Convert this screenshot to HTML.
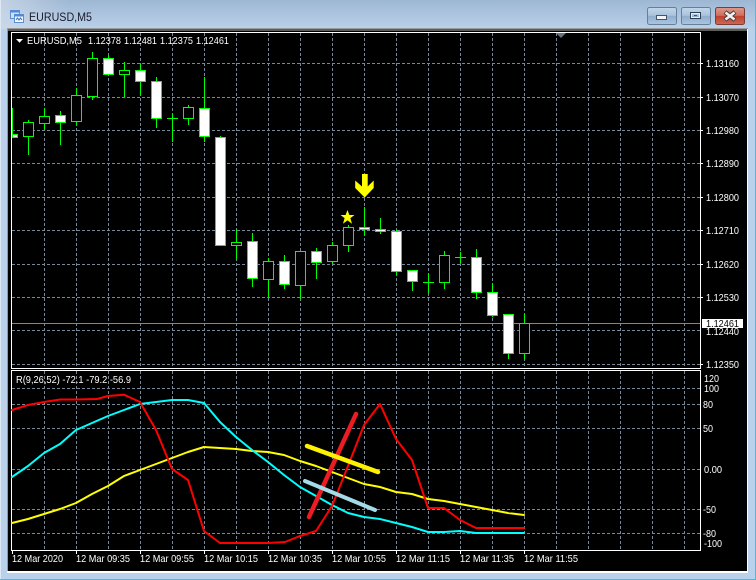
<!DOCTYPE html>
<html><head><meta charset="utf-8"><style>
html,body{margin:0;padding:0;background:#b9d1ea}
body{width:756px;height:580px;overflow:hidden;position:relative}
svg{position:absolute;left:0;top:0;display:block}
text{font-family:"Liberation Sans",sans-serif;font-size:10.5px;fill:#fff}
.g line{stroke:#778899;stroke-width:1;stroke-dasharray:3 2;shape-rendering:crispEdges}
.c line,.c rect{stroke:#0f0;stroke-width:1;shape-rendering:crispEdges}
.c .h{fill:#000}.c .w{fill:#fff}
.s{fill:none;stroke-linejoin:round;stroke-linecap:round}
</style></head><body>
<svg width="756" height="580" viewBox="0 0 756 580" xmlns="http://www.w3.org/2000/svg">
<defs>
<linearGradient id="t" x1="0" y1="0" x2="0" y2="1"><stop offset="0" stop-color="#9db7d3"/><stop offset="1" stop-color="#bad1ea"/></linearGradient>
<linearGradient id="tl" x1="0" y1="0" x2="1" y2="0"><stop offset="0" stop-color="#cfdbe8" stop-opacity=".75"/><stop offset="1" stop-color="#cfdbe8" stop-opacity="0"/></linearGradient>
<linearGradient id="b" x1="0" y1="0" x2="0" y2="1"><stop offset="0" stop-color="#c3d6e9"/><stop offset=".48" stop-color="#a9c2dc"/><stop offset=".5" stop-color="#8fadcc"/><stop offset="1" stop-color="#abc6e2"/></linearGradient>
<linearGradient id="r" x1="0" y1="0" x2="0" y2="1"><stop offset="0" stop-color="#dd9a8c"/><stop offset=".48" stop-color="#cf6e5c"/><stop offset=".5" stop-color="#bd3f2c"/><stop offset="1" stop-color="#cd6a55"/></linearGradient>
</defs>
<rect width="756" height="580" fill="#b9d1ea"/>
<rect width="756" height="29" fill="url(#t)"/>
<rect width="70" height="29" fill="url(#tl)"/>
<rect x="0" y="0" width="1" height="580" fill="#dce8f4"/>
<rect x="755" y="0" width="1" height="580" fill="#3cc5d2"/>
<rect x="0" y="579" width="756" height="1" fill="#3cc5d2"/>
<rect x="7" y="28" width="741" height="1" fill="#9b9b9b"/>
<rect x="7" y="29" width="741" height="2" fill="#5c5c5c"/>
<rect x="8" y="31" width="739" height="540" fill="#000"/>
<rect x="7" y="29" width="1" height="543" fill="#8e99a5"/>
<rect x="747" y="29" width="1" height="543" fill="#fff"/>
<rect x="7" y="571" width="741" height="2" fill="#fff"/>

<!-- title icon -->
<g shape-rendering="crispEdges">
<rect x="10.5" y="10.5" width="9" height="8" fill="#cfe0f5" stroke="#5d8fd0"/>
<rect x="10.5" y="10.5" width="9" height="2" fill="#4f88d6"/>
<rect x="14.5" y="14.5" width="9" height="8" fill="#f2f7fd" stroke="#5d8fd0"/>
<rect x="14.5" y="14.5" width="9" height="2" fill="#4f88d6"/>
</g>
<path d="M16 20l1.5-2 1.5 2 1.5-2 1.5 2" fill="none" stroke="#3a70b8" stroke-width="1"/>
<text x="29" y="21" style="font-size:11.5px;fill:#1b1b2b" textLength="63" lengthAdjust="spacingAndGlyphs">EURUSD,M5</text>

<!-- buttons -->
<rect x="647.5" y="7.5" width="29" height="17" rx="2" fill="url(#b)" stroke="#66809c"/>
<rect x="656.5" y="15.5" width="10" height="4" fill="#f1f4f7" stroke="#45556a"/>
<rect x="681.5" y="7.5" width="29" height="17" rx="2" fill="url(#b)" stroke="#66809c"/>
<rect x="690.5" y="12.5" width="10" height="6" fill="none" stroke="#2f3f52" stroke-width="1"/>
<rect x="691.5" y="13.5" width="8" height="4" fill="none" stroke="#e9eef3"/>
<rect x="694" y="15" width="3" height="1" fill="#43536a"/>
<rect x="715.5" y="7.5" width="29" height="17" rx="2" fill="url(#r)" stroke="#7c3b36"/>
<path d="M725 12l10 8M735 12l-10 8" stroke="#4a3a3c" stroke-width="4.4"/>
<path d="M725.5 12.5l9 7M734.5 12.5l-9 7" stroke="#f2f2f2" stroke-width="2.6"/>

<!-- grid -->
<g class="g">
<line x1="44.5" y1="33" x2="44.5" y2="368"/><line x1="76.5" y1="33" x2="76.5" y2="368"/><line x1="108.5" y1="33" x2="108.5" y2="368"/><line x1="140.5" y1="33" x2="140.5" y2="368"/><line x1="172.5" y1="33" x2="172.5" y2="368"/><line x1="204.5" y1="33" x2="204.5" y2="368"/><line x1="236.5" y1="33" x2="236.5" y2="368"/><line x1="268.5" y1="33" x2="268.5" y2="368"/><line x1="300.5" y1="33" x2="300.5" y2="368"/><line x1="332.5" y1="33" x2="332.5" y2="368"/><line x1="364.5" y1="33" x2="364.5" y2="368"/><line x1="396.5" y1="33" x2="396.5" y2="368"/><line x1="428.5" y1="33" x2="428.5" y2="368"/><line x1="460.5" y1="33" x2="460.5" y2="368"/><line x1="492.5" y1="33" x2="492.5" y2="368"/><line x1="524.5" y1="33" x2="524.5" y2="368"/><line x1="556.5" y1="33" x2="556.5" y2="368"/><line x1="588.5" y1="33" x2="588.5" y2="368"/><line x1="620.5" y1="33" x2="620.5" y2="368"/><line x1="652.5" y1="33" x2="652.5" y2="368"/><line x1="684.5" y1="33" x2="684.5" y2="368"/>
<line x1="44.5" y1="371" x2="44.5" y2="550"/><line x1="76.5" y1="371" x2="76.5" y2="550"/><line x1="108.5" y1="371" x2="108.5" y2="550"/><line x1="140.5" y1="371" x2="140.5" y2="550"/><line x1="172.5" y1="371" x2="172.5" y2="550"/><line x1="204.5" y1="371" x2="204.5" y2="550"/><line x1="236.5" y1="371" x2="236.5" y2="550"/><line x1="268.5" y1="371" x2="268.5" y2="550"/><line x1="300.5" y1="371" x2="300.5" y2="550"/><line x1="332.5" y1="371" x2="332.5" y2="550"/><line x1="364.5" y1="371" x2="364.5" y2="550"/><line x1="396.5" y1="371" x2="396.5" y2="550"/><line x1="428.5" y1="371" x2="428.5" y2="550"/><line x1="460.5" y1="371" x2="460.5" y2="550"/><line x1="492.5" y1="371" x2="492.5" y2="550"/><line x1="524.5" y1="371" x2="524.5" y2="550"/><line x1="556.5" y1="371" x2="556.5" y2="550"/><line x1="588.5" y1="371" x2="588.5" y2="550"/><line x1="620.5" y1="371" x2="620.5" y2="550"/><line x1="652.5" y1="371" x2="652.5" y2="550"/><line x1="684.5" y1="371" x2="684.5" y2="550"/>
<line x1="12" y1="63.5" x2="700" y2="63.5"/><line x1="12" y1="97.5" x2="700" y2="97.5"/><line x1="12" y1="130.5" x2="700" y2="130.5"/><line x1="12" y1="163.5" x2="700" y2="163.5"/><line x1="12" y1="197.5" x2="700" y2="197.5"/><line x1="12" y1="230.5" x2="700" y2="230.5"/><line x1="12" y1="264.5" x2="700" y2="264.5"/><line x1="12" y1="297.5" x2="700" y2="297.5"/><line x1="12" y1="330.5" x2="700" y2="330.5"/><line x1="12" y1="364.5" x2="700" y2="364.5"/>
<line x1="12" y1="388.5" x2="700" y2="388.5"/><line x1="12" y1="404.5" x2="700" y2="404.5"/><line x1="12" y1="428.5" x2="700" y2="428.5"/><line x1="12" y1="469.5" x2="700" y2="469.5"/><line x1="12" y1="509.5" x2="700" y2="509.5"/><line x1="12" y1="533.5" x2="700" y2="533.5"/>
</g>

<!-- bid line -->
<rect x="12" y="323" width="688" height="1" fill="#778899"/>

<!-- candles -->
<g class="c">
<line x1="12.5" y1="108" x2="12.5" y2="137"/><rect class="w" x="12.5" y="134.5" width="5" height="3"/>
<line x1="28.5" y1="120" x2="28.5" y2="155"/><rect class="h" x="23.5" y="122.5" width="10" height="14"/>
<line x1="44.5" y1="108" x2="44.5" y2="129"/><rect class="h" x="39.5" y="116.5" width="10" height="7"/>
<line x1="60.5" y1="111" x2="60.5" y2="145"/><rect class="w" x="55.5" y="115.5" width="10" height="7"/>
<line x1="76.5" y1="88" x2="76.5" y2="125"/><rect class="h" x="71.5" y="95.5" width="10" height="26"/>
<line x1="92.5" y1="52" x2="92.5" y2="100"/><rect class="h" x="87.5" y="58.5" width="10" height="38"/>
<line x1="108.5" y1="55" x2="108.5" y2="76"/><rect class="w" x="103.5" y="58.5" width="10" height="16"/>
<line x1="124.5" y1="62" x2="124.5" y2="97"/><rect class="h" x="119.5" y="70.5" width="10" height="4"/>
<line x1="140.5" y1="64" x2="140.5" y2="95"/><rect class="w" x="135.5" y="70.5" width="10" height="11"/>
<line x1="156.5" y1="77" x2="156.5" y2="128"/><rect class="w" x="151.5" y="81.5" width="10" height="37"/>
<line x1="172.5" y1="114" x2="172.5" y2="142"/><line x1="167" y1="118.5" x2="178" y2="118.5"/>
<line x1="188.5" y1="105" x2="188.5" y2="125"/><rect class="h" x="183.5" y="107.5" width="10" height="11"/>
<line x1="204.5" y1="77" x2="204.5" y2="142"/><rect class="w" x="199.5" y="108.5" width="10" height="28"/>
<line x1="220.5" y1="136" x2="220.5" y2="245"/><rect class="w" x="215.5" y="137.5" width="10" height="108"/>
<line x1="236.5" y1="229" x2="236.5" y2="259"/><rect class="h" x="231.5" y="242.5" width="10" height="3"/>
<line x1="252.5" y1="233" x2="252.5" y2="287"/><rect class="w" x="247.5" y="241.5" width="10" height="37"/>
<line x1="268.5" y1="258" x2="268.5" y2="297"/><rect class="h" x="263.5" y="261.5" width="10" height="18"/>
<line x1="284.5" y1="255" x2="284.5" y2="289"/><rect class="w" x="279.5" y="261.5" width="10" height="23"/>
<line x1="300.5" y1="251" x2="300.5" y2="299"/><rect class="h" x="295.5" y="251.5" width="10" height="34"/>
<line x1="316.5" y1="248" x2="316.5" y2="279"/><rect class="w" x="311.5" y="251.5" width="10" height="11"/>
<line x1="332.5" y1="242" x2="332.5" y2="264"/><rect class="h" x="327.5" y="245.5" width="10" height="16"/>
<line x1="348.5" y1="225" x2="348.5" y2="252"/><rect class="h" x="343.5" y="227.5" width="10" height="18"/>
<line x1="364.5" y1="207" x2="364.5" y2="236"/><rect class="w" x="359.5" y="227.5" width="10" height="2"/>
<line x1="380.5" y1="218" x2="380.5" y2="234"/><rect class="w" x="375.5" y="229.5" width="10" height="2"/>
<line x1="396.5" y1="230" x2="396.5" y2="275"/><rect class="w" x="391.5" y="231.5" width="10" height="40"/>
<line x1="412.5" y1="270" x2="412.5" y2="291"/><rect class="w" x="407.5" y="270.5" width="10" height="11"/>
<line x1="428.5" y1="273" x2="428.5" y2="293"/><line x1="423" y1="282.5" x2="434" y2="282.5"/>
<line x1="444.5" y1="251" x2="444.5" y2="289"/><rect class="h" x="439.5" y="255.5" width="10" height="27"/>
<line x1="460.5" y1="252" x2="460.5" y2="263"/><line x1="455" y1="257.5" x2="466" y2="257.5"/>
<line x1="476.5" y1="249" x2="476.5" y2="299"/><rect class="w" x="471.5" y="257.5" width="10" height="35"/>
<line x1="492.5" y1="283" x2="492.5" y2="317"/><rect class="w" x="487.5" y="292.5" width="10" height="23"/>
<line x1="508.5" y1="314" x2="508.5" y2="359"/><rect class="w" x="503.5" y="314.5" width="10" height="39"/>
<line x1="524.5" y1="314" x2="524.5" y2="359"/><rect class="h" x="519.5" y="323.5" width="10" height="30"/>
</g>

<!-- star and arrow -->
<path d="M347.5 210l1.9 5h5.1l-4.1 3.1 1.6 5.6-4.5-3.3-4.5 3.3 1.6-5.6-4.1-3.1h5.1z" fill="#ff0"/>
<path d="M362 174h5.7v12.5l6-6v7.5l-9 9.5-9.5-9.5v-7.5l6.8 6z" fill="#ff0"/>

<!-- frames -->
<g shape-rendering="crispEdges" fill="#fff">
<rect x="11" y="32" width="690" height="1"/>
<rect x="11" y="32" width="1" height="337"/>
<rect x="700" y="32" width="1" height="337"/>
<rect x="11" y="368" width="690" height="1"/>
<rect x="11" y="370" width="690" height="1"/>
<rect x="11" y="370" width="1" height="181"/>
<rect x="700" y="370" width="1" height="181"/>
<rect x="11" y="550" width="690" height="1"/>
<rect x="12" y="551" width="1" height="3"/><rect x="76" y="551" width="1" height="3"/><rect x="140" y="551" width="1" height="3"/><rect x="204" y="551" width="1" height="3"/><rect x="268" y="551" width="1" height="3"/><rect x="332" y="551" width="1" height="3"/><rect x="396" y="551" width="1" height="3"/><rect x="460" y="551" width="1" height="3"/><rect x="524" y="551" width="1" height="3"/>
<rect x="701" y="63" width="2" height="1"/><rect x="701" y="97" width="2" height="1"/><rect x="701" y="130" width="2" height="1"/><rect x="701" y="163" width="2" height="1"/><rect x="701" y="197" width="2" height="1"/><rect x="701" y="230" width="2" height="1"/><rect x="701" y="264" width="2" height="1"/><rect x="701" y="297" width="2" height="1"/><rect x="701" y="364" width="2" height="1"/>
</g>
<path d="M556 33h10l-5 5z" fill="#66727e"/>

<!-- indicator lines -->
<polyline class="s" stroke="#ff0" stroke-width="2" points="12,523 28,519 44,514 60,509 76,503 92,494 108,486 124,476 140,470 156,464 172,458 188,452 204,447 220,448 236,449 252,451 268,452 284,455 300,461 316,466 332,472 348,478 364,484 380,487 396,492 412,494 428,499 444,501 460,504 476,507 492,510 508,513 524,515"/>
<polyline class="s" stroke="#0ff" stroke-width="2" points="12,477 28,466 44,453 60,444 76,430 92,423 108,416 124,410 140,404 156,402 172,400 188,400 204,403 220,422 236,437 252,450 268,462 284,475 300,487 316,496 332,505 348,513 364,517 380,519 396,523 412,527 428,532 444,532 460,531 476,533 492,533 508,533 524,533"/>
<polyline class="s" stroke="#f00" stroke-width="2" points="12,410 28,405 44,402 60,399.5 76,399.5 97,399 108,396 124,394.7 140,402 156,430 172,469 188,480 204,531 220,543 236,543 252,543 268,543 285,542 300,536 316,531 332,506 348,466 364,425 380,404 396,439 412,460 428,508 444,508 460,520 476,528 492,528 508,528 524,528"/>
<line x1="309" y1="517" x2="356" y2="414" stroke="#ed1c24" stroke-width="4.5" stroke-linecap="round"/>
<line x1="307" y1="446" x2="378" y2="472" stroke="#fff200" stroke-width="4.5" stroke-linecap="round"/>
<line x1="305" y1="481" x2="375" y2="510" stroke="#a4dbe8" stroke-width="4" stroke-linecap="round"/>

<!-- legend -->
<path d="M16 39h7l-3.5 3.8z" fill="#fff"/>
<text x="27" y="44" textLength="55" lengthAdjust="spacingAndGlyphs">EURUSD,M5</text>
<text x="88" y="44" textLength="33" lengthAdjust="spacingAndGlyphs">1.12378</text>
<text x="124" y="44" textLength="33" lengthAdjust="spacingAndGlyphs">1.12481</text>
<text x="160" y="44" textLength="33" lengthAdjust="spacingAndGlyphs">1.12375</text>
<text x="196" y="44" textLength="33" lengthAdjust="spacingAndGlyphs">1.12461</text>
<text x="16" y="383" textLength="115" lengthAdjust="spacingAndGlyphs">R(9,26,52) -72.1 -79.2 -56.9</text>

<!-- price axis -->
<g>
<text x="706" y="67" textLength="33" lengthAdjust="spacingAndGlyphs">1.13160</text>
<text x="706" y="101" textLength="33" lengthAdjust="spacingAndGlyphs">1.13070</text>
<text x="706" y="134" textLength="33" lengthAdjust="spacingAndGlyphs">1.12980</text>
<text x="706" y="167" textLength="33" lengthAdjust="spacingAndGlyphs">1.12890</text>
<text x="706" y="201" textLength="33" lengthAdjust="spacingAndGlyphs">1.12800</text>
<text x="706" y="234" textLength="33" lengthAdjust="spacingAndGlyphs">1.12710</text>
<text x="706" y="268" textLength="33" lengthAdjust="spacingAndGlyphs">1.12620</text>
<text x="706" y="301" textLength="33" lengthAdjust="spacingAndGlyphs">1.12530</text>
<text x="706" y="335" textLength="33" lengthAdjust="spacingAndGlyphs">1.12440</text>
<text x="706" y="368" textLength="33" lengthAdjust="spacingAndGlyphs">1.12350</text>
</g>
<rect x="702" y="319" width="41" height="9" fill="#fff"/>
<text x="706" y="327" style="fill:#000" textLength="33" lengthAdjust="spacingAndGlyphs">1.12461</text>

<!-- indicator axis -->
<text x="704" y="382" textLength="15" lengthAdjust="spacingAndGlyphs">120</text>
<text x="704" y="392" textLength="15" lengthAdjust="spacingAndGlyphs">100</text>
<text x="703" y="408" textLength="10" lengthAdjust="spacingAndGlyphs">80</text>
<text x="703" y="432" textLength="10" lengthAdjust="spacingAndGlyphs">50</text>
<text x="704" y="473" textLength="18" lengthAdjust="spacingAndGlyphs">0.00</text>
<text x="703" y="513" textLength="13" lengthAdjust="spacingAndGlyphs">-50</text>
<text x="703" y="537" textLength="13" lengthAdjust="spacingAndGlyphs">-80</text>
<text x="704" y="547" textLength="18" lengthAdjust="spacingAndGlyphs">-100</text>

<!-- time axis -->
<text x="12" y="562" textLength="51" lengthAdjust="spacingAndGlyphs">12 Mar 2020</text>
<text x="76" y="562" textLength="54" lengthAdjust="spacingAndGlyphs">12 Mar 09:35</text>
<text x="140" y="562" textLength="54" lengthAdjust="spacingAndGlyphs">12 Mar 09:55</text>
<text x="204" y="562" textLength="54" lengthAdjust="spacingAndGlyphs">12 Mar 10:15</text>
<text x="268" y="562" textLength="54" lengthAdjust="spacingAndGlyphs">12 Mar 10:35</text>
<text x="332" y="562" textLength="54" lengthAdjust="spacingAndGlyphs">12 Mar 10:55</text>
<text x="396" y="562" textLength="54" lengthAdjust="spacingAndGlyphs">12 Mar 11:15</text>
<text x="460" y="562" textLength="54" lengthAdjust="spacingAndGlyphs">12 Mar 11:35</text>
<text x="524" y="562" textLength="54" lengthAdjust="spacingAndGlyphs">12 Mar 11:55</text>
</svg>
</body></html>
